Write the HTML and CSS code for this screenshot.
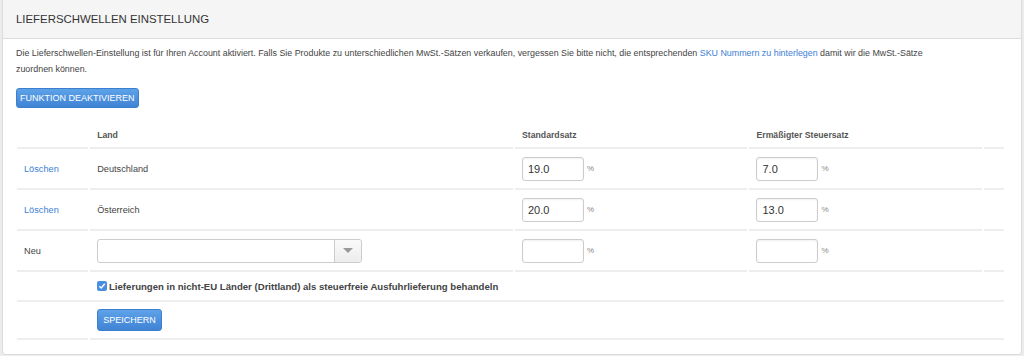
FILE: index.html
```html
<!DOCTYPE html>
<html lang="de">
<head>
    <meta charset="UTF-8">
    <title>Lieferschwellen Einstellung</title>
    <link rel="stylesheet" href="styles.css">
</head>
<body>
    <div class="panel">
        <div class="panel-heading">LIEFERSCHWELLEN EINSTELLUNG</div>
        <div class="panel-body">
            <p class="intro">Die Lieferschwellen-Einstellung ist für Ihren Account aktiviert. Falls Sie Produkte zu unterschiedlichen MwSt.-Sätzen verkaufen, vergessen Sie bitte nicht, die entsprechenden <a href="#">SKU Nummern zu hinterlegen</a> damit wir die MwSt.-Sätze zuordnen können.</p>
            <button class="btn">FUNKTION DEAKTIVIEREN</button>

            <table class="rates">
                <colgroup>
                    <col class="c-action">
                    <col class="c-land">
                    <col class="c-rate">
                    <col class="c-rate">
                    <col class="c-rest">
                </colgroup>
                <thead>
                    <tr>
                        <th></th>
                        <th>Land</th>
                        <th>Standardsatz</th>
                        <th>Ermäßigter Steuersatz</th>
                        <th></th>
                    </tr>
                </thead>
                <tbody>
                    <tr>
                        <td><a href="#">Löschen</a></td>
                        <td>Deutschland</td>
                        <td><input class="rate" type="text" value="19.0"><span class="pct">%</span></td>
                        <td><input class="rate" type="text" value="7.0"><span class="pct">%</span></td>
                        <td></td>
                    </tr>
                    <tr>
                        <td><a href="#">Löschen</a></td>
                        <td>Österreich</td>
                        <td><input class="rate" type="text" value="20.0"><span class="pct">%</span></td>
                        <td><input class="rate" type="text" value="13.0"><span class="pct">%</span></td>
                        <td></td>
                    </tr>
                    <tr>
                        <td>Neu</td>
                        <td>
                            <div class="select">
                                <span class="select-value"></span>
                                <span class="select-arrow"></span>
                            </div>
                        </td>
                        <td><input class="rate" type="text" value=""><span class="pct">%</span></td>
                        <td><input class="rate" type="text" value=""><span class="pct">%</span></td>
                        <td></td>
                    </tr>
                    <tr class="check-row">
                        <td colspan="5">
                            <label class="check">
                                <span class="box">
                                    <svg width="8" height="8" viewBox="0 0 8 8"><path d="M1.3 4.2 L3.2 6 L6.8 1.8" fill="none" stroke="#fff" stroke-width="1.4"/></svg>
                                </span>
                                Lieferungen in nicht-EU Länder (Drittland) als steuerfreie Ausfuhrlieferung behandeln
                            </label>
                        </td>
                    </tr>
                    <tr class="save-row">
                        <td></td>
                        <td colspan="4"><button class="btn">SPEICHERN</button></td>
                    </tr>
                </tbody>
            </table>
        </div>
    </div>
</body>
</html>
```

FILE: styles.css
```css
body {
    margin: 0;
    padding: 0;
    background-color: #ececec;
    font-family: 'Liberation Sans', sans-serif;
    color: #444;
}
.panel {
    margin: 0 2px;
    height: 355px;
    box-sizing: border-box;
    background-color: #fff;
    border: 1px solid #dcdcdc;
    border-top: 0;
    border-radius: 0 0 4px 4px;
}
.panel-heading {
    height: 38px;
    line-height: 39px;
    padding: 0 13px;
    background-color: #f5f5f5;
    border-bottom: 1px solid #dcdcdc;
    font-size: 11.4px;
    color: #333;
}
.panel-body {
    padding: 0 13px;
}
.intro {
    max-width: 922px;
    margin: 6px 0 11px;
    font-size: 8.9px;
    line-height: 16px;
    color: #444;
}
a {
    color: #3b80d6;
    text-decoration: none;
}
.btn {
    display: block;
    height: 20px;
    padding: 0 3px;
    border: 1px solid #3d7fcf;
    border-radius: 3px;
    background: linear-gradient(#5ea2e9, #3f83d4);
    color: #fff;
    font-family: 'Liberation Sans', sans-serif;
    font-size: 9px;
    cursor: pointer;
}
.rates {
    margin: 15px 0 0 -1px;
    border-collapse: separate;
    border-spacing: 2px 0;
    table-layout: fixed;
    width: 991px;
    font-size: 9.2px;
}
.c-action { width: 71px; }
.c-land { width: 422px; }
.c-rate { width: 232px; }
.c-rest { width: 20px; }
.rates th, .rates td {
    padding: 0 7px;
    text-align: left;
    border-bottom: 2px solid #eee;
    vertical-align: middle;
}
.rates th {
    height: 24px;
    font-size: 8.7px;
    font-weight: bold;
    color: #555;
}
.rates td {
    height: 39px;
    color: #444;
}
.rate {
    width: 62px;
    height: 24px;
    box-sizing: border-box;
    padding: 0 5px;
    border: 1px solid #ccc;
    border-radius: 3px;
    box-shadow: inset 0 1px 2px rgba(0, 0, 0, 0.06);
    font-family: 'Liberation Sans', sans-serif;
    font-size: 11px;
    color: #333;
    vertical-align: middle;
}
.pct {
    margin-left: 3px;
    font-size: 8px;
    color: #888;
    vertical-align: middle;
}
.select {
    display: flex;
    width: 265px;
    height: 24px;
    box-sizing: border-box;
    border: 1px solid #ccc;
    border-radius: 3px;
}
.select-value {
    flex: 1;
}
.select-arrow {
    width: 26px;
    border-left: 1px solid #ccc;
    border-radius: 0 3px 3px 0;
    background: linear-gradient(#fafafa, #ececec);
    display: flex;
    align-items: center;
    justify-content: center;
}
.select-arrow::after {
    content: "";
    border-left: 5px solid transparent;
    border-right: 5px solid transparent;
    border-top: 5px solid #999;
}
.check-row td {
    height: 28px;
    padding-left: 80px;
}
.check {
    display: flex;
    align-items: center;
    gap: 2px;
    font-size: 9.6px;
    font-weight: bold;
    color: #444;
}
.box {
    width: 10px;
    height: 10px;
    border-radius: 2px;
    background-color: #4a8ee0;
    display: flex;
    align-items: center;
    justify-content: center;
}
.save-row td {
    height: 36px;
}
.save-row .btn {
    height: 22px;
    padding: 0 5px;
}
```
